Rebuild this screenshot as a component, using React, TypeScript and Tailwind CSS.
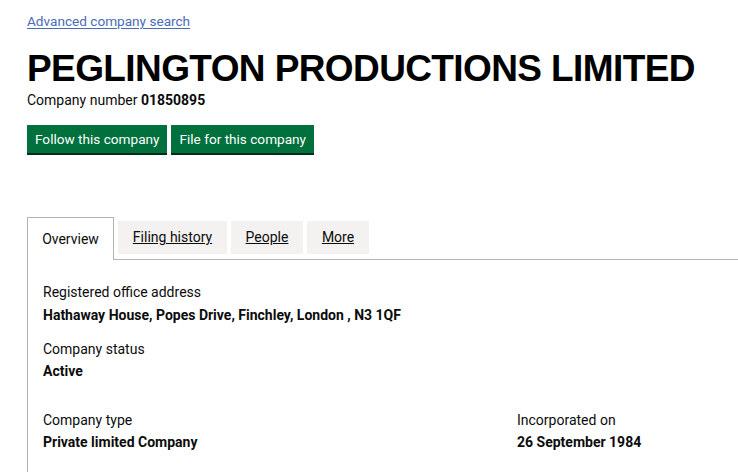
import React from "react";

const body = { fontFamily: "Roboto, 'Noto Sans', Arial, sans-serif" };

export default function App() {
  return (
    <div className="h-[472px] w-[738px] overflow-hidden bg-white text-[#0b0c0c]" style={body}>
      <div className="pl-[27px] pt-[11px]">
        <a href="#" className="block w-fit text-[13.6px] leading-[20px] text-[#4a6cb4] underline underline-offset-2">
          Advanced company search
        </a>
        <h1
          className="mt-[18px] text-[37px] font-bold leading-[40px] tracking-[-0.6px] text-black whitespace-nowrap"
          style={{ fontFamily: "'Liberation Sans', Arial, sans-serif" }}
        >
          PEGLINGTON PRODUCTIONS LIMITED
        </h1>
        <p className="mt-[1px] text-[14px] leading-[20px]">
          Company number <strong className="font-bold">01850895</strong>
        </p>
        <div className="mt-[15px] flex gap-[4px]">
          <button className="h-[28px] bg-[#00703c] px-[8px] text-[13.6px] leading-[28px] text-white shadow-[0_2px_0_#002d18]">
            Follow this company
          </button>
          <button className="h-[28px] bg-[#00703c] px-[8px] text-[13.6px] leading-[28px] text-white shadow-[0_2px_0_#002d18]">
            File for this company
          </button>
        </div>
      </div>
      <div className="mt-[64px] pl-[27px]">
        <div className="flex items-start border-b border-[#b1b4b6]">
          <div className="-mb-px h-[43px] w-[87px] border border-b-0 border-[#b1b4b6] bg-white pt-[11px] text-center text-[14px]">
            Overview
          </div>
          <div className="ml-[4px] mt-[4px] flex h-[33px] gap-[4px] text-[14px]">
            <a href="#" className="flex w-[109px] items-center justify-center bg-[#f3f2f1] underline">Filing history</a>
            <a href="#" className="flex w-[72px] items-center justify-center bg-[#f3f2f1] underline">People</a>
            <a href="#" className="flex w-[62px] items-center justify-center bg-[#f3f2f1] underline">More</a>
          </div>
        </div>
        <div className="h-[240px] border-l border-[#b1b4b6] pl-[15px] pt-[22px] text-[14px] leading-[20px]">
          <div>Registered office address</div>
          <div className="mt-[3px] font-bold">Hathaway House, Popes Drive, Finchley, London , N3 1QF</div>
          <div className="mt-[14px]">Company status</div>
          <div className="mt-[2px] font-bold">Active</div>
          <div className="mt-[29px] flex">
            <div className="w-[474px]">
              <div>Company type</div>
              <div className="mt-[2px] font-bold">Private limited Company</div>
            </div>
            <div>
              <div>Incorporated on</div>
              <div className="mt-[2px] font-bold">26 September 1984</div>
            </div>
          </div>
        </div>
      </div>
    </div>
  );
}
